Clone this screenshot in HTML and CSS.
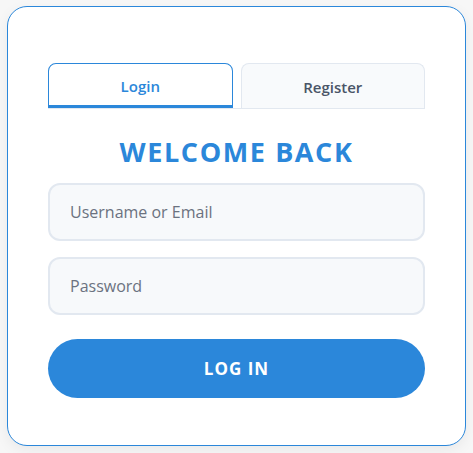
FILE: index.html
```html
<!DOCTYPE html>
<html lang="en">
<head>
<meta charset="utf-8">
<title>Login</title>
<link rel="stylesheet" href="styles.css">
</head>
<body>
<main class="card">
  <div class="tabs">
    <button class="tab tab-active" type="button">Login</button>
    <button class="tab" type="button">Register</button>
  </div>
  <h1 class="title">WELCOME BACK</h1>
  <form class="form">
    <input class="field" type="text" placeholder="Username or Email">
    <input class="field" type="password" placeholder="Password">
    <button class="submit" type="button">LOG IN</button>
  </form>
</main>
</body>
</html>
```

FILE: styles.css
```css
* { box-sizing: border-box; }
html, body { margin: 0; padding: 0; }
body {
  min-height: 100vh;
  background: #f7f7f7;
  font-family: "Open Sans", "Noto Sans", sans-serif;
  display: flex;
  align-items: flex-start;
  justify-content: center;
  padding-top: 6px;
}
.card {
  width: 459px;
  height: 440px;
  background: #fff;
  border: 1px solid #2b87da;
  border-radius: 20px;
  box-shadow: 0 4px 14px rgba(0, 0, 0, 0.06);
  padding: 56px 40px 40px;
}
.tabs {
  display: flex;
  gap: 8px;
  border-bottom: 1px solid #e2e8f0;
}
.tab {
  flex: 1;
  height: 45px;
  font-family: inherit;
  font-size: 15px;
  font-weight: 600;
  color: #4a5568;
  background: #f8fafc;
  border: 1px solid #e2e8f0;
  border-bottom: none;
  border-radius: 8px 8px 0 0;
  padding: 1px 0 0;
}
.tab-active {
  color: #2b87da;
  background: #fff;
  border: 1px solid #2b87da;
  border-bottom: 3px solid #2b87da;
  padding-top: 3px;
}
.title {
  margin: 27px 0 15px;
  text-align: center;
  font-size: 27px;
  font-weight: 700;
  letter-spacing: 1.6px;
  color: #2b87da;
  line-height: 1.2;
}
.form {
  display: flex;
  flex-direction: column;
}
.field {
  height: 58px;
  border: 2px solid #e2e8f0;
  border-radius: 12px;
  background: #f7f9fb;
  padding: 0 20px;
  font-family: inherit;
  font-size: 16px;
  color: #333;
  margin-bottom: 16px;
  outline: none;
}
.field::placeholder { color: #6b7280; }
.submit {
  margin-top: 8px;
  height: 59px;
  border: none;
  border-radius: 30px;
  background: #2b87da;
  color: #fff;
  font-family: inherit;
  font-size: 17px;
  font-weight: 700;
  letter-spacing: 1px;
}
```
